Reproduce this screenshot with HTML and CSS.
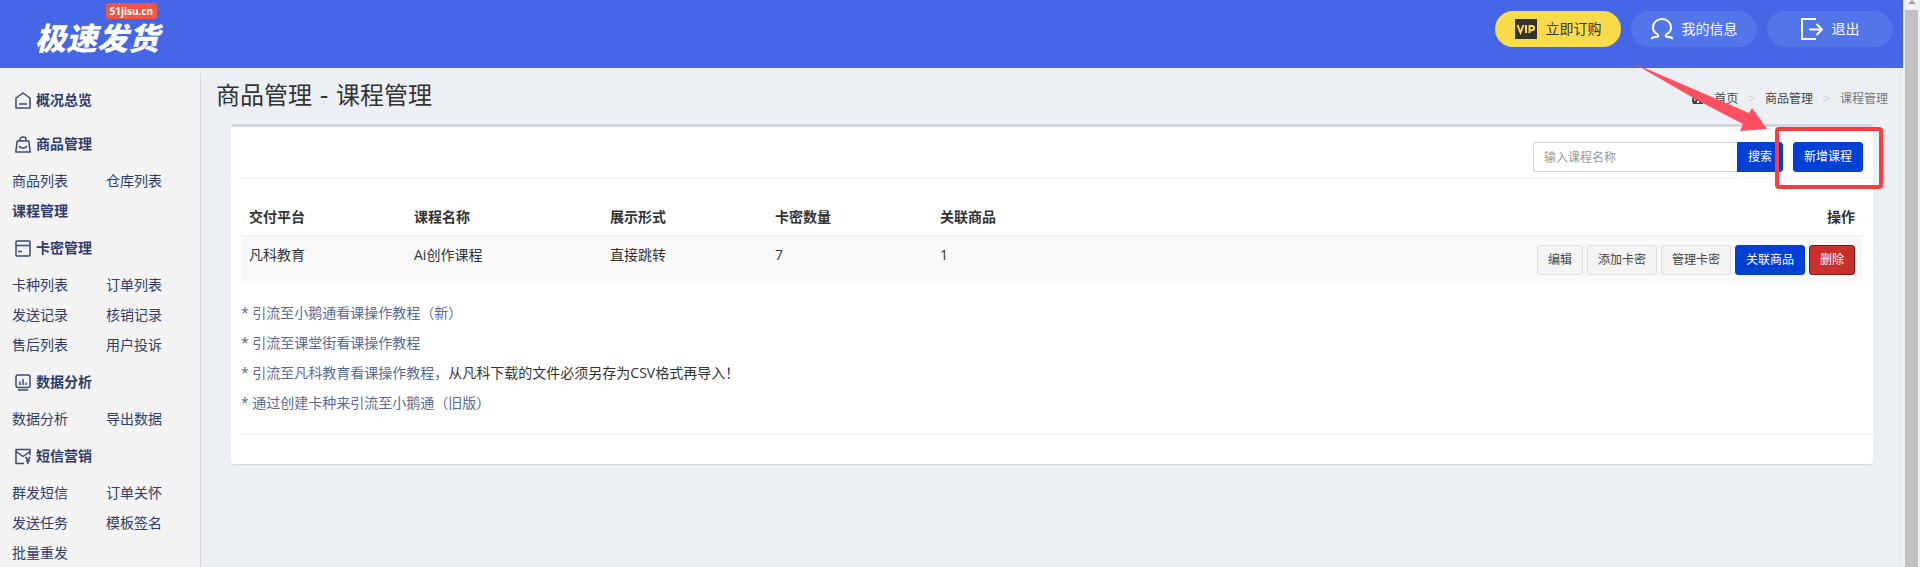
FILE: index.html
```html
<!DOCTYPE html>
<html lang="zh-CN">
<head>
    <meta charset="UTF-8">
    <meta name="viewport" content="width=device-width, initial-scale=1.0">
    <title>课程管理</title>
    <link rel="stylesheet" href="styles.css">
</head>
<body>
    <div class="page">
        <header class="header">
            <a href="#" class="logo">
                <span class="logo-badge">51jisu.cn</span>
                <span class="logo-name">极速发货</span>
            </a>
            <nav class="user-menu">
                <a href="#" class="pill pill-vip">
                    <svg width="22" height="20" viewBox="0 0 22 20"><path fill="#333" d="M0 0h22v20H0z"/><path fill="none" stroke="#fadb4c" stroke-width="2" d="M2.500 6l3 7.500 3-7.500M11 6v8M14.500 14V7h2.500a1.900 1.900 0 0 1 0 4.200h-2.500"/></svg>
                    立即订购
                </a>
                <a href="#" class="pill">
                    <svg width="22" height="22" viewBox="0 0 22 22" fill="none" stroke="#fff" stroke-width="2"><path d="M0 21c1-1.500 3-2 5-2 2.500 0 3-1.500 1-3C3.500 14.500 2 12.500 2 9.500 2 4.500 6 1 11 1s9 3.500 9 8.500c0 3-1.500 5-4 6.500-2 1.500-1.500 3 1 3 2 0 4 .5 5 2"/></svg>
                    我的信息
                </a>
                <a href="#" class="pill">
                    <svg width="22" height="22" viewBox="0 0 22 22" fill="none" stroke="#fff" stroke-width="2"><path d="M15 1H1v20h14M8 11.500h13M15.500 6l5.500 5.500-5.500 5.500"/></svg>
                    退出
                </a>
            </nav>
        </header>

        <div class="wrapper">
            <aside class="sidebar">
                <h3><svg class="icon" viewBox="0 0 16 17"><path d="M1 6L8 1l7 5v10H1zM4 12h8"/></svg><a href="#">概况总览</a></h3>

                <h3><svg class="icon" viewBox="0 0 16 17"><path d="M2.200 5h11.600l1.400 11H.8zM5 5V3.500a3 2.500 0 0 1 6 0V5M4 10c1.500 2.500 6.500 2.500 8 0"/></svg>商品管理</h3>
                <ul>
                    <li><a href="#">商品列表</a></li>
                    <li><a href="#">仓库列表</a></li>
                    <li class="active"><a href="#">课程管理</a></li>
                </ul>

                <h3><svg class="icon" viewBox="0 0 16 17"><rect x="1" y="1" width="14" height="15" rx="1"/><path d="M1 5.500h14M3 11.500h4"/></svg>卡密管理</h3>
                <ul>
                    <li><a href="#">卡种列表</a></li>
                    <li><a href="#">订单列表</a></li>
                    <li><a href="#">发送记录</a></li>
                    <li><a href="#">核销记录</a></li>
                    <li><a href="#">售后列表</a></li>
                    <li><a href="#">用户投诉</a></li>
                </ul>

                <h3><svg class="icon" viewBox="0 0 16 17"><rect x="1" y="1" width="14" height="12.500" rx="2"/><path d="M5 7.500V11M8 5v6M11 8.500V11M3 16h10"/></svg>数据分析</h3>
                <ul>
                    <li><a href="#">数据分析</a></li>
                    <li><a href="#">导出数据</a></li>
                </ul>

                <h3><svg class="icon" viewBox="0 0 16 17"><path d="M9 15.500H1V1.500h14V7M1 3.500l7 5 7-5M10.500 9l2.300 3 2.300-3M12.800 12v4M11 13h4"/></svg>短信营销</h3>
                <ul>
                    <li><a href="#">群发短信</a></li>
                    <li><a href="#">订单关怀</a></li>
                    <li><a href="#">发送任务</a></li>
                    <li><a href="#">模板签名</a></li>
                    <li><a href="#">批量重发</a></li>
                </ul>
            </aside>

            <main class="content">
                <div class="content-header">
                    <h1>商品管理 - 课程管理</h1>
                    <nav class="breadcrumb">
                        <a href="#"><svg width="12" height="12" viewBox="0 0 12 12"><path fill="#444" d="M6 1a6 6 0 0 0-6 6c0 1.500.4 2.800 1 4h10c.6-1.200 1-2.500 1-4a6 6 0 0 0-6-6z"/><path fill="#ecf0f5" d="M2 6h1.500v1.500H2zM5.500 2.500H7V4H5.500zM9 6h1.500v1.500H9zM5 8h2v2H5z"/></svg>首页</a>
                        <span class="sep">&gt;</span>
                        <a href="#">商品管理</a>
                        <span class="sep">&gt;</span>
                        <span class="current">课程管理</span>
                    </nav>
                </div>

                <section class="box">
                    <div class="box-header">
                        <form class="search">
                            <input type="text" placeholder="输入课程名称" aria-label="课程名称">
                            <button type="button" class="btn btn-primary">搜索</button>
                        </form>
                        <div class="add">
                            <button type="button" class="btn btn-primary">新增课程</button>
                            <!-- 操作指引 -->
                            <div class="guide-frame"></div>
                            <svg class="guide-arrow" width="134" height="70" viewBox="0 0 134 70"><path fill="#ff5061" d="M0 0l116 50 3-5 15 21-27 2 3-7-46-24z"/></svg>
                        </div>
                    </div>

                    <div class="box-body">
                        <table>
                            <thead>
                                <tr>
                                    <th class="col">交付平台</th>
                                    <th class="col-wide">课程名称</th>
                                    <th class="col">展示形式</th>
                                    <th class="col">卡密数量</th>
                                    <th class="col">关联商品</th>
                                    <th class="actions">操作</th>
                                </tr>
                            </thead>
                            <tbody>
                                <tr>
                                    <td>凡科教育</td>
                                    <td>Ai创作课程</td>
                                    <td>直接跳转</td>
                                    <td>7</td>
                                    <td>1</td>
                                    <td class="actions">
                                        <div class="btn-list">
                                            <button type="button" class="btn btn-default">编辑</button>
                                            <button type="button" class="btn btn-default">添加卡密</button>
                                            <button type="button" class="btn btn-default">管理卡密</button>
                                            <button type="button" class="btn btn-primary">关联商品</button>
                                            <button type="button" class="btn btn-danger">删除</button>
                                        </div>
                                    </td>
                                </tr>
                            </tbody>
                        </table>

                        <div class="notes">
                            <p><a href="#">* 引流至小鹅通看课操作教程（新）</a></p>
                            <p><a href="#">* 引流至课堂街看课操作教程</a></p>
                            <p><a href="#">* 引流至凡科教育看课操作教程，</a>从凡科下载的文件必须另存为CSV格式再导入！</p>
                            <p><a href="#">* 通过创建卡种来引流至小鹅通（旧版）</a></p>
                        </div>
                    </div>
                    <div class="box-footer"></div>
                </section>
            </main>
        </div>
    </div>

    <div class="scrollbar">
        <span class="scroll-up"></span>
        <span class="scroll-thumb"></span>
    </div>
</body>
</html>
```

FILE: styles.css
```css
* {
    box-sizing: border-box;
}
body {
    margin: 0;
    display: flex;
    height: 100vh;
    overflow: hidden;
    font-family: "Open Sans", "Noto Sans CJK SC", sans-serif;
    font-size: 14px;
    line-height: 20px;
    color: #333;
    background-color: #ecf0f5;
}
a {
    color: inherit;
    text-decoration: none;
}
h1, h3, p, ul {
    margin: 0;
    padding: 0;
}
.page {
    flex: 1;
    display: flex;
    flex-direction: column;
    min-width: 0;
}

/* header */
.header {
    display: flex;
    justify-content: space-between;
    flex: none;
    height: 68px;
    padding: 0 10px 0 35px;
    background-color: #4466e7;
    color: #fff;
}
.logo {
    display: flex;
    flex-direction: column;
    padding-top: 3px;
}
.logo-badge {
    align-self: flex-end;
    margin-right: 2px;
    padding: 0 4px;
    border-radius: 3px;
    background-color: #f25542;
    font-family: "Noto Sans", sans-serif;
    font-size: 10px;
    font-weight: bold;
    line-height: 16px;
}
.logo-name {
    font-family: "Noto Sans CJK SC", sans-serif;
    font-size: 31px;
    font-weight: 900;
    font-style: italic;
    line-height: 36px;
}
.user-menu {
    display: flex;
    gap: 10px;
    padding-top: 11px;
}
.pill {
    display: flex;
    align-items: center;
    justify-content: center;
    gap: 9px;
    width: 126px;
    height: 36px;
    border-radius: 18px;
    background-color: #5375ea;
}
.pill-vip {
    background-color: #fadb4c;
    color: #333;
}

/* sidebar */
.wrapper {
    flex: 1;
    display: flex;
    min-height: 0;
}
.sidebar {
    flex: none;
    width: 201px;
    border-top: 10px solid #eef2f7;
    border-right: 1px solid #d2d6de;
    background-color: #f3f3f3;
    color: #2f3c6e;
}
.sidebar h3 {
    display: flex;
    align-items: center;
    gap: 5px;
    height: 44px;
    padding-left: 15px;
    font-size: 14px;
}
.icon {
    width: 16px;
    height: 17px;
    fill: none;
    stroke: #3c4879;
    stroke-width: 1.5;
    stroke-linejoin: round;
}
.sidebar ul {
    display: grid;
    grid-template-columns: 94px 1fr;
    padding-left: 12px;
    list-style: none;
    line-height: 30px;
}
.sidebar .active {
    font-weight: bold;
}

/* content */
.content {
    flex: 1;
    min-width: 0;
}
.content-header {
    display: flex;
    align-items: center;
    justify-content: space-between;
    height: 56px;
    padding: 0 15px;
}
.content-header h1 {
    font-family: "DejaVu Sans", "Noto Sans CJK SC", sans-serif;
    font-size: 24px;
    font-weight: normal;
}
.breadcrumb {
    display: flex;
    gap: 10px;
    padding-top: 5px;
    font-size: 12px;
    color: #444;
}
.breadcrumb a {
    display: flex;
    align-items: center;
    gap: 10px;
}
.breadcrumb .sep {
    color: #ccc;
}
.breadcrumb .current {
    color: #777;
}
.box {
    margin: 0 30px;
    border-top: 3px solid #d2d6de;
    border-radius: 3px;
    background-color: #fff;
    box-shadow: 0 1px 1px rgba(0, 0, 0, 0.1);
}
.box-header {
    display: flex;
    justify-content: flex-end;
    gap: 10px;
    padding: 15px 10px 5px;
    border-bottom: 1px solid #f4f4f4;
}
.search {
    display: flex;
}
.search input {
    width: 204px;
    height: 30px;
    padding: 5px 10px;
    border: 1px solid #d2d6de;
    border-right: 0;
    border-radius: 3px 0 0 3px;
    font-family: inherit;
    font-size: 12px;
}
.search input::placeholder {
    color: #999;
}
.search .btn {
    border-radius: 0 3px 3px 0;
}
.btn {
    height: 30px;
    padding: 0 10px;
    border: 1px solid transparent;
    border-radius: 3px;
    font-family: inherit;
    font-size: 12px;
    line-height: 18px;
    white-space: nowrap;
}
.btn-default {
    border-color: #ddd;
    background-color: #f4f4f4;
    color: #444;
}
.btn-primary {
    border-color: #0040d4;
    background-color: #0040d4;
    color: #fff;
}
.btn-danger {
    border-color: #761c19;
    background-color: #c9302c;
    color: #fff;
}

/* table */
.box-body {
    padding: 21px 10px 15px;
}
table {
    width: 100%;
    border-collapse: collapse;
}
th {
    padding: 8px;
    border-bottom: 2px solid #f4f4f4;
    text-align: left;
}
td {
    padding: 8px;
    background-color: #f9f9f9;
    vertical-align: top;
}
.col {
    width: 165px;
}
.col-wide {
    width: 196px;
}
.actions {
    text-align: right;
}
.btn-list {
    display: flex;
    justify-content: flex-end;
    gap: 4px;
}
.notes {
    margin-top: 15px;
    line-height: 30px;
}
.notes a {
    color: #586b95;
}
.box-footer {
    height: 31px;
    border-top: 1px solid #f4f4f4;
}

/* guide marks over the add button */
.add {
    position: relative;
}
.guide-frame {
    position: absolute;
    top: -15px;
    left: -18px;
    width: 108px;
    height: 62px;
    border: 4px solid #ff3b3b;
    border-radius: 4px;
}
.guide-arrow {
    position: absolute;
    top: -79px;
    right: 96px;
}

/* scrollbar */
.scrollbar {
    display: flex;
    flex-direction: column;
    align-items: center;
    flex: none;
    width: 17px;
    background-color: #f1f1f1;
}
.scroll-up {
    margin-bottom: 6px;
    border: 4px solid transparent;
    border-top: 0;
    border-bottom-color: #a3a3a3;
}
.scroll-thumb {
    flex: 1;
    width: 13px;
    background-color: #c1c1c1;
}
```
